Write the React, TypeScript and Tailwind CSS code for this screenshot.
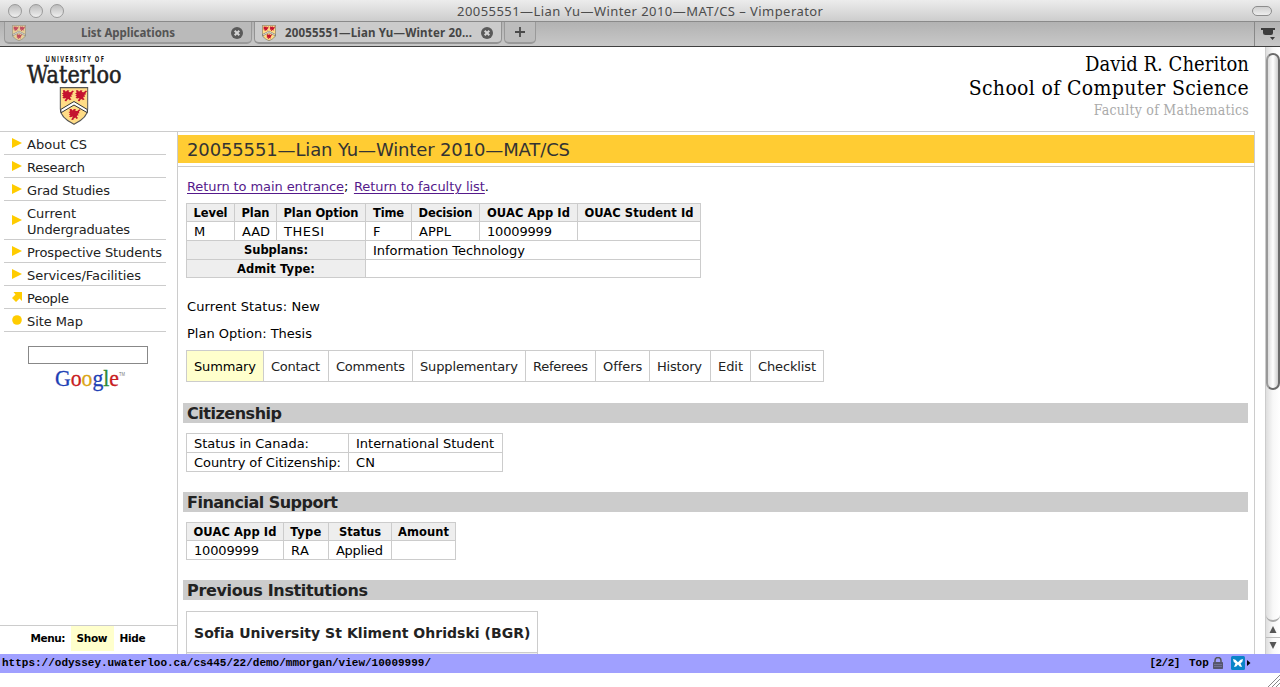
import { useLayoutEffect, useRef, useState } from 'react';

type FitProps = { w: number; className?: string; children: string };

// One line of text whose tracking is tuned so that it spans exactly w pixels.
function Fit({ w, className = '', children }: FitProps) {
  const ref = useRef<HTMLSpanElement>(null);
  const [spacing, setSpacing] = useState(0);
  useLayoutEffect(() => {
    const el = ref.current;
    if (!el) return;
    el.style.letterSpacing = '0px';
    const next = (w - el.getBoundingClientRect().width) / Math.max(1, children.length - 1);
    el.style.letterSpacing = next + 'px';
    setSpacing(next);
  }, [w, children]);
  return (
    <span ref={ref} className={'inline-block whitespace-nowrap ' + className} style={{ letterSpacing: spacing }}>
      {children}
    </span>
  );
}

function Lion({ x, y }: { x: number; y: number }) {
  return (
    <path
      transform={`translate(${x} ${y})`}
      d="M1 1l2 0 1 1.5 1.5-1.5 2 .2-.8 1.6 2 .2 2.2-1.8 1.2.8-1.6 1.6.4 1.6-1.6.2.8 2-1.6 0-.2 1.4 1.4 1.2-1.8 1-1-1.4-1.6.8-.6 1.6-2-.2.8-1.6 1-1.6-2.4.6-1.6-.8 1.4-1.2-1.6-.8 1.4-1.2L0 4l1.6-.6z"
      fill="#c4122f"
    />
  );
}

function Shield({ className, faded = false }: { className: string; faded?: boolean }) {
  return (
    <svg viewBox="0 0 29 38" className={className} opacity={faded ? 0.65 : 1} preserveAspectRatio="none">
      <path d="M.7.7h27.6v21c0 7-6.500 12-13.800 15.600C7.200 33.700.7 28.700.7 21.700z" fill="#ffdc86" stroke="#555" strokeWidth="1.200" />
      <path d="M1.200 22.500L14.500 14.500l13.300 8v3.200L14.500 18 1.600 25.700z" fill="#fff" stroke="#333" strokeWidth="1" />
      <Lion x={2.300} y={2.300} />
      <Lion x={15.500} y={2.300} />
      <Lion x={9} y={21} />
    </svg>
  );
}

function CloseDot() {
  return (
    <svg viewBox="0 0 12 12" className="size-3 shrink-0">
      <circle cx="6" cy="6" r="6" fill="#5a5a5a" />
      <path d="M3.700 3.700l4.600 4.600M8.300 3.700L3.700 8.300" stroke="#d4d4d4" strokeWidth="2" />
    </svg>
  );
}

function TitleBar() {
  return (
    <div className="flex h-[22px] items-center border-b border-[#8a8a8a] bg-linear-to-b from-[#ececec] to-[#cdcdcd] pl-2 pr-2">
      <div className="flex w-[449px] gap-[7px]">
        {[0, 1, 2].map((i) => (
          <span key={i} className="size-[14px] rounded-full border border-[#9a9a9a] bg-linear-to-b from-[#bdbdbd] to-[#efefef]" />
        ))}
      </div>
      <Fit w={366} className="font-['Noto_Sans'] text-[13px] leading-[22px] text-[#4c4c4c]">20055551—Lian Yu—Winter 2010—MAT/CS – Vimperator</Fit>
      <span className="ml-auto h-[10px] w-5 rounded-full border border-[#8d8d8d] bg-linear-to-b from-[#d0d0d0] to-[#ededed]" />
    </div>
  );
}

function TabBar() {
  return (
    <div className="flex h-[25px] items-start border-b border-[#3f3f3f] bg-linear-to-b from-[#b2b2b2] to-[#c8c8c8] pl-1 font-['Noto_Sans'] text-[11.500px] font-bold">
      <div className="flex h-[22px] w-[248px] items-center rounded-b-[5px] border-x border-b-2 border-[#999] bg-[#bababa] pl-[7px] pr-2 pt-[2px] text-[#545454]">
        <Shield className="h-4 w-[14px]" faded />
        <Fit w={94} className="ml-[55px]">List Applications</Fit>
        <span className="ml-auto flex"><CloseDot /></span>
      </div>
      <div className="ml-[2px] flex h-[22px] w-[248px] items-center rounded-b-[5px] border-x border-b-2 border-[#939393] bg-[#cbcbcb] pl-[7px] pr-2 pt-[2px] text-[#454545]">
        <Shield className="h-4 w-[14px]" />
        <Fit w={187} className="ml-[9px]">20055551—Lian Yu—Winter 20...</Fit>
        <span className="ml-auto flex"><CloseDot /></span>
      </div>
      <div className="ml-[2px] flex h-[22px] w-8 items-center justify-center rounded-b-[5px] border-x border-b-2 border-[#999] bg-[#bcbcbc]">
        <svg viewBox="0 0 10 10" className="size-[10px]"><path d="M5 0v10M0 5h10" stroke="#4a4a4a" strokeWidth="1.800" /></svg>
      </div>
      <div className="ml-auto flex h-6 w-[26px] justify-center border-l border-[#888] pt-[6px]">
        <svg viewBox="0 0 14 12" className="h-3 w-[14px]">
          <path d="M0 0h14v2h-2v3q0 2-2 2H4.500q-2.500 0-2.500-2V2H0zM9 9h5l-2.500 3z" fill="#3c3c3c" />
        </svg>
      </div>
    </div>
  );
}

function Header() {
  return (
    <div className="flex h-[85px] justify-between border-b border-[#ccc]">
      <svg viewBox="0 0 96 72" className="ml-[27px] mt-[8px] h-[72px] w-24 overflow-visible">
        <g transform="translate(18.500 7) scale(.72 1)">
          <text textLength="81" lengthAdjust="spacing" className="font-['Open_Sans']" fontSize="8" fontWeight="700" fill="#111">UNIVERSITY OF</text>
        </g>
        <text x="0" y="28" textLength="94.500" lengthAdjust="spacingAndGlyphs" className="font-['DejaVu_Serif']" fontSize="24" fill="#222" stroke="#222" strokeWidth=".5">Waterloo</text>
        <svg x="32.500" y="32" width="29" height="38"><Shield className="h-[38px] w-[29px]" /></svg>
      </svg>
      <div className="mr-[6px] flex flex-col items-end pt-[5px] font-['DejaVu_Serif_Condensed','DejaVu_Serif']">
        <Fit w={164} className="text-[20px] leading-6">David R. Cheriton</Fit>
        <Fit w={280} className="text-[21px] leading-6">School of Computer Science</Fit>
        <Fit w={155} className="text-[14px] leading-[20px] text-[#aaa]">Faculty of Mathematics</Fit>
      </div>
    </div>
  );
}

const nav: { lines: [string, number][]; mark: 'arrow' | 'out' | 'dot' }[] = [
  { lines: [['About CS', 60]], mark: 'arrow' },
  { lines: [['Research', 58]], mark: 'arrow' },
  { lines: [['Grad Studies', 83]], mark: 'arrow' },
  { lines: [['Current', 49], ['Undergraduates', 103]], mark: 'arrow' },
  { lines: [['Prospective Students', 135]], mark: 'arrow' },
  { lines: [['Services/Facilities', 114]], mark: 'arrow' },
  { lines: [['People', 42]], mark: 'out' },
  { lines: [['Site Map', 56]], mark: 'dot' },
];

const google: [string, string][] = [['G', '#1d3fb5'], ['o', '#c8201f'], ['o', '#dba514'], ['g', '#1d3fb5'], ['l', '#2a8a35'], ['e', '#c8201f']];

function Sidebar() {
  return (
    <aside className="flex w-[178px] shrink-0 flex-col border-r border-[#ccc]">
      <ul className="ml-1 w-[162px]">
        {nav.map(({ lines, mark }) => (
          <li key={lines[0][0]} className="flex items-center border-b border-[#ccc] pb-px pl-[8px] pt-[5px] text-[13px] leading-4 text-[#222]">
            <svg viewBox="0 0 10 10" className="mr-[5px] size-[10px] shrink-0 -translate-y-[2px]" fill="#fc0">
              {mark === 'arrow' && <path d="M0 0l10 5-10 5z" />}
              {mark === 'out' && <path d="M1.500 0H10v9L7.500 6.500 4 10 0 6l3.500-3.500z" />}
              {mark === 'dot' && <circle cx="5" cy="5" r="4.800" />}
            </svg>
            <span className="flex flex-col items-start">
              {lines.map(([t, w]) => <Fit key={t} w={w}>{t}</Fit>)}
            </span>
          </li>
        ))}
      </ul>
      <input className="ml-7 mt-[14px] h-[18px] w-[120px] shrink-0 border border-[#888] bg-white outline-none" />
      <svg viewBox="0 0 72 28" className="ml-[54px] mt-[3px] h-7 w-[72px] shrink-0 overflow-visible">
        <text x="1" y="18.500" textLength="64" lengthAdjust="spacingAndGlyphs" className="font-['Liberation_Serif']" fontSize="24">
          {google.map(([c, fill], i) => <tspan key={i} fill={fill} stroke={fill} strokeWidth=".3">{c}</tspan>)}
        </text>
        <text x="65" y="9" textLength="6" lengthAdjust="spacingAndGlyphs" className="font-['Liberation_Sans']" fontSize="4.500" fill="#777">TM</text>
      </svg>
      <div className="mt-auto flex h-[29px] border-t border-[#ccc] text-[10.500px] font-bold leading-[25px]">
        <Fit w={35} className="ml-[30.500px]">Menu:</Fit>
        <span className="ml-[5.500px] h-[25px] w-[43px] bg-[#ffc] pl-[6px]"><Fit w={31}>Show</Fit></span>
        <Fit w={26} className="ml-[6px]">Hide</Fit>
      </div>
    </aside>
  );
}

function Cell({ t, w, head = false, span = '' }: { t?: string; w?: number; head?: boolean; span?: string }) {
  return (
    <div className={'flex items-center overflow-hidden whitespace-nowrap ' + (head ? 'justify-center bg-[#eee] pt-px text-[11.500px] leading-[17px] font-bold ' : 'bg-white pl-[7px] pt-px text-[13px] leading-[17px] ') + span}>
      {t && <Fit w={w ?? 0}>{t}</Fit>}
    </div>
  );
}

function Section({ t, w, className }: { t: string; w: number; className: string }) {
  return (
    <h2 className={'ml-[5px] mr-[6px] h-5 shrink-0 bg-[#ccc] pl-[4px] text-[16px] font-bold leading-[22px] text-[#222] ' + className}>
      <Fit w={w}>{t}</Fit>
    </h2>
  );
}

const tabs: [string, number][] = [['Summary', 62], ['Contact', 49], ['Comments', 69], ['Supplementary', 98], ['Referees', 55], ['Offers', 39], ['History', 45], ['Edit', 25], ['Checklist', 58]];
const heads: [string, number][] = [['Level', 34], ['Plan', 28], ['Plan Option', 75], ['Time', 31], ['Decision', 54], ['OUAC App Id', 83], ['OUAC Student Id', 109]];
const values: [string, number][] = [['M', 10], ['AAD', 28], ['THESI', 40], ['F', 7], ['APPL', 32], ['10009999', 65], ['', 0]];

function Main() {
  return (
    <main className="flex w-[1077px] shrink-0 flex-col overflow-hidden border-r border-[#ccc] text-[13px] text-black">
      <h1 className="mt-[3px] h-7 shrink-0 bg-[#fc3] pl-[9px] text-[18px] leading-[29px] text-[#333]">
        <Fit w={383}>20055551—Lian Yu—Winter 2010—MAT/CS</Fit>
      </h1>
      <div className="mt-[3px] h-px shrink-0 bg-[#ccc]" />
      <div className="ml-[9px] mt-[10px] flex h-5 shrink-0 leading-5">
        <a className="text-[#551a8b]"><Fit w={157} className="underline underline-offset-2">Return to main entrance</Fit></a>
        <span className="w-[10px]">;</span>
        <a className="text-[#551a8b]"><Fit w={131} className="underline underline-offset-2">Return to faculty list</Fit></a>
        <span>.</span>
      </div>
      <div className="ml-2 mt-[6px] grid w-[515px] shrink-0 grid-cols-[47px_41px_88px_45px_67px_97px_122px] grid-rows-[17px_18px_18px_17px] gap-px bg-[#ccc] p-px">
        {heads.map(([t, w]) => <Cell key={t} t={t} w={w} head />)}
        {values.map(([t, w], i) => <Cell key={i} t={t} w={w} />)}
        <Cell t="Subplans:" w={64} head span="col-span-3" />
        <Cell t="Information Technology" w={152} span="col-span-4" />
        <Cell t="Admit Type:" w={78} head span="col-span-3" />
        <Cell span="col-span-4" />
      </div>
      <p className="ml-[9px] mt-[19px] h-5 shrink-0 leading-5"><Fit w={133}>Current Status: New</Fit></p>
      <p className="ml-[9px] mt-[7px] h-5 shrink-0 leading-5"><Fit w={125}>Plan Option: Thesis</Fit></p>
      <div className="ml-2 mt-[6px] grid w-[638px] shrink-0 grid-cols-[76px_64px_83px_112px_69px_53px_60px_39px_72px] grid-rows-[30px] gap-px bg-[#ccc] p-px text-[#222]">
        {tabs.map(([t, w], i) => (
          <div key={t} className={'flex items-center pl-[7px] pt-[2px] ' + (i === 0 ? 'bg-[#ffc] text-black' : 'bg-white')}><Fit w={w}>{t}</Fit></div>
        ))}
      </div>
      <Section t="Citizenship" w={95} className="mt-[21px]" />
      <div className="ml-2 mt-[10px] grid w-[317px] shrink-0 grid-cols-[161px_153px] grid-rows-[18px_18px] gap-px bg-[#ccc] p-px">
        <Cell t="Status in Canada:" w={115} />
        <Cell t="International Student" w={138} />
        <Cell t="Country of Citizenship:" w={147} />
        <Cell t="CN" w={19} />
      </div>
      <Section t="Financial Support" w={151} className="mt-[20px]" />
      <div className="ml-2 mt-[10px] grid w-[270px] shrink-0 grid-cols-[96px_44px_62px_63px] grid-rows-[17px_18px] gap-px bg-[#ccc] p-px">
        <Cell t="OUAC App Id" w={83} head />
        <Cell t="Type" w={31} head />
        <Cell t="Status" w={42} head />
        <Cell t="Amount" w={51} head />
        <Cell t="10009999" w={65} />
        <Cell t="RA" w={18} />
        <Cell t="Applied" w={47} />
        <Cell />
      </div>
      <Section t="Previous Institutions" w={181} className="mt-[20px]" />
      <div className="ml-2 mt-[11px] grid w-[352px] shrink-0 grid-rows-[40px_30px] gap-px bg-[#ccc] p-px">
        <div className="flex items-center bg-white pl-[7px] pt-[2px] text-[14px] font-bold text-[#222]">
          <Fit w={336}>Sofia University St Kliment Ohridski (BGR)</Fit>
        </div>
        <div className="bg-[#eee]" />
      </div>
    </main>
  );
}

function ScrollBar() {
  return (
    <div className="ml-auto flex w-[15px] flex-col border-l border-[#ccc] bg-linear-to-r from-[#dedede] via-[#f8f8f8] to-[#fff]">
      <div className="h-[6px] shrink-0" />
      <div className="h-[337px] w-[14px] shrink-0 rounded-full border-2 border-[#6b6b6b] border-l-[#999] bg-linear-to-r from-[#ddd] via-[#fff] to-[#ccc]" />
      <div className="h-[232px] shrink-0 rounded-b-full border-b-2 border-[#aaa]" />
      {['M7 4l3.500 7h-7z', 'M7 11l3.500-7h-7z'].map((d, i) => (
        <svg key={i} viewBox="0 0 14 15" className={i === 0 ? 'h-4 w-[14px] shrink-0 border-b border-[#bbb]' : 'h-[15px] w-[14px] shrink-0'}><path d={d} fill="#555" /></svg>
      ))}
    </div>
  );
}

function StatusBar() {
  return (
    <div className="flex h-[19px] shrink-0 items-center bg-[#a0a0ff] pl-[2px] pr-[29px] font-['Liberation_Mono'] text-[11px] font-bold leading-[19px] text-black">
      <Fit w={429}>https://odyssey.uwaterloo.ca/cs445/22/demo/mmorgan/view/10009999/</Fit>
      <Fit w={31} className="ml-auto mr-[9px]">[2/2]</Fit>
      <Fit w={20} className="mr-[4px]">Top</Fit>
      <svg viewBox="0 0 10 12" className="mr-2 h-3 w-[10px] -translate-y-px">
        <path d="M2 6V3.500a3 3 0 016 0V6" fill="none" stroke="#555" strokeWidth="1.500" />
        <rect y="5" width="10" height="7" rx=".7" fill="#55556c" />
        <path d="M1 7.500h8M1 9.500h8" stroke="#77779a" strokeWidth=".8" />
      </svg>
      <svg viewBox="0 0 20 14" className="h-[14px] w-5 -translate-y-px">
        <rect width="14" height="14" rx="1.500" fill="#0a84c8" />
        <path d="M2 3q2.500 0 5 3.200Q9.500 3 12 3q0 3-2.500 4.200L11 11q-2.500 0-4-2.600Q5.500 11 3 11l1.500-3.800Q2 6 2 3z" fill="#fff" />
        <path d="M16 4l3.500 3L16 10z" fill="#000" />
      </svg>
    </div>
  );
}

export default function App() {
  return (
    <div className="flex h-[687px] w-[1280px] flex-col overflow-hidden bg-white font-['DejaVu_Sans',sans-serif] text-black">
      <TitleBar />
      <TabBar />
      <div className="flex h-[607px] shrink-0 overflow-hidden">
        <div className="flex w-[1255px] flex-col">
          <Header />
          <div className="flex min-h-0 flex-1">
            <Sidebar />
            <Main />
          </div>
        </div>
        <ScrollBar />
      </div>
      <StatusBar />
      <div className="flex flex-1 items-end justify-end">
        <svg viewBox="0 0 12 12" className="size-3"><path d="M0 12L12 0M4 12l8-8M8 12l4-4" stroke="#888" /></svg>
      </div>
    </div>
  );
}
